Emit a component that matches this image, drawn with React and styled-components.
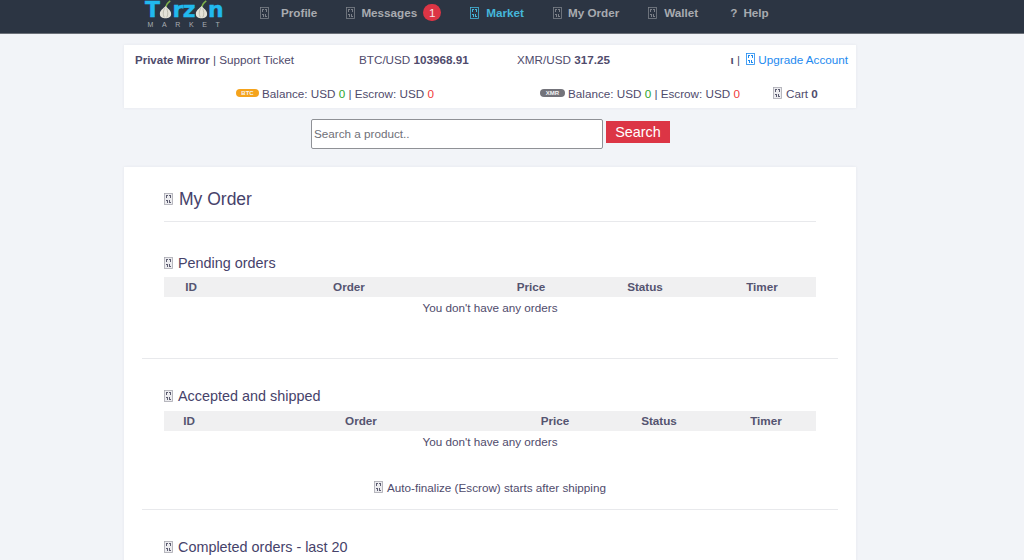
import React from 'react';
import styled, { createGlobalStyle } from 'styled-components';

const Global = createGlobalStyle`
  html, body { margin: 0; padding: 0; height: 560px; overflow: hidden; }
  body { background: #f2f4f8; font-family: "Liberation Sans", Arial, sans-serif; font-size: 11.7px; color: #4f4b6c; }
  * { box-sizing: border-box; }
`;

const Navbar = styled.div`
  height: 34px;
  background: #2c3543;
  border-bottom: 1px solid #6b7078;
  display: flex;
  align-items: flex-start;
  padding-left: 145px;
`;

const Logo = styled.div`
  width: 78px;
  height: 30px;
  margin-right: 37px;
  display: flex;
  flex-direction: column;
  align-items: center;
`;

const LogoName = styled.div`
  display: flex;
  align-items: center;
  height: 20px;
  font-family: "DejaVu Sans", sans-serif;
  font-weight: 700;
  font-size: 22px;
  line-height: 20px;
  letter-spacing: -0.6px;
  -webkit-text-stroke: 0.4px #21b9ee;
  color: #21b9ee;
`;

const LogoSub = styled.div`
  font-size: 7px;
  line-height: 8px;
  margin-top: 1px;
  letter-spacing: 8.6px;
  margin-right: -8px;
  color: #a9adb2;
`;

const NavList = styled.div`
  display: flex;
  align-items: center;
  gap: 29px;
  height: 25px;
`;

const NavItem = styled.a`
  display: flex;
  align-items: center;
  gap: ${p => p.$gap || 7}px;
  margin-right: ${p => p.$after || 0}px;
  font-weight: 700;
  font-size: 11.7px;
  color: ${p => (p.$active ? '#45b6da' : '#a8abb0')};
`;

const Badge = styled.span`
  width: 18px;
  height: 17px;
  border-radius: 9px;
  background: #dc3545;
  color: #f5e6e8;
  font-weight: 400;
  font-size: 11.7px;
  line-height: 17px;
  text-align: center;
`;

const Page = styled.div`
  width: 732px;
  margin: 11px 0 0 124px;
`;

const Card = styled.div`
  background: #fff;
  box-shadow: 0 0 3px rgba(40, 50, 80, 0.07);
`;

const InfoCard = styled(Card)`
  height: 63px;
`;

const RatesRow = styled.div`
  display: grid;
  grid-template-columns: 224px 158px 1fr;
  align-items: center;
  height: 28px;
  padding: 0 8px 0 11px;
`;

const BalanceRow = styled.div`
  display: grid;
  grid-template-columns: 304px 233px 1fr;
  align-items: center;
  height: 35px;
  padding: 5px 0 0 112px;
`;

const Cell = styled.div`
  white-space: pre;
  display: flex;
  align-items: center;
  justify-content: ${p => (p.$between ? 'space-between' : 'flex-start')};
  gap: ${p => p.$gap || 3}px;
`;

const Account = styled.span`
  display: flex;
  align-items: center;
  gap: 3px;
`;

const Mirror = styled.b`
  font-size: 11.5px;
`;

const Coin = styled.span`
  width: ${p => (p.$xmr ? 25 : 23)}px;
  height: 8px;
  border-radius: 4px;
  background: ${p => (p.$xmr ? '#73737a' : '#f5a31c')};
  color: #f4f4f4;
  font-size: 6px;
  font-weight: 700;
  line-height: 8px;
  text-align: center;
`;

const Green = styled.span`color: #2ea52e;`;
const Red = styled.span`color: #f03a3a;`;
const Link = styled.a`color: #1e8af0;`;

const SearchRow = styled.div`
  display: flex;
  align-items: flex-start;
  gap: 3px;
  margin: 11px 0 18px 187px;
`;

const SearchInput = styled.input`
  width: 292px;
  height: 30px;
  padding: 0 2px 2px;
  border: 1px solid #8f9196;
  border-radius: 2px;
  background: #fff;
  font-family: inherit;
  font-size: 11.7px;
  &::placeholder { color: #6f7078; opacity: 1; }
`;

const SearchButton = styled.button`
  width: 64px;
  height: 22px;
  margin-top: 2px;
  padding: 0;
  border: 0;
  background: #dc3545;
  color: #fff;
  font-family: inherit;
  font-size: 14.4px;
  line-height: 22px;
`;

const MainCard = styled(Card)`
  padding: 0 18px;
  height: 420px;
`;

const Inner = styled.div`
  padding: 0 22px;
`;

const PageHead = styled(Inner)`
  height: 54px;
  padding-top: 21px;
`;

const PageTitle = styled.div`
  display: flex;
  align-items: center;
  gap: 6px;
  height: 22px;
  font-size: 17.5px;
  line-height: 22px;
  color: #46426a;
`;

const Line = styled.div`
  height: 1px;
  background: #e8e9ec;
  margin: ${p => p.$margin || '0'};
`;

const SectionTitle = styled.div`
  display: flex;
  align-items: center;
  gap: 5px;
  height: 20px;
  margin-top: ${p => p.$top}px;
  margin-bottom: ${p => p.$bottom || 5}px;
  font-size: 14.4px;
  color: #46426a;
`;

const TableHead = styled.div`
  display: grid;
  grid-template-columns: ${p => p.$cols};
  height: 20px;
  background: #f0f0f1;
  font-weight: 700;
  font-size: 11.7px;
  line-height: 20px;
  text-align: center;
  color: #555470;
`;

const Empty = styled.div`
  height: 21px;
  padding-top: 1px;
  text-align: center;
  line-height: 20px;
`;

const Note = styled.div`
  display: flex;
  justify-content: center;
  align-items: center;
  gap: 4px;
  height: 20px;
  margin-top: 25px;
  margin-bottom: 12px;
`;

// the page's icon font is not available in the shot, so icons are "missing glyph" boxes
const Tofu = ({ color = '#7c8088', ink, fill = 'none' }) => (
  <svg width="9" height="12" viewBox="0 0 9 12" style={{ flex: 'none' }}>
    <rect x="0.5" y="0.5" width="8" height="11" fill={fill} stroke={color} strokeWidth="0.8" />
    <path d="M2 2h2v1H3v2H2zM5 2h2v3H6V3H5zM2 7h2v3H3V8H2zM5 7h1v2h1v1H5z" fill={ink || color} />
  </svg>
);

const BodyTofu = () => <Tofu color="#a8a8b0" ink="#5c5c70" fill="#ececef" />;

const Onion = () => (
  <svg width="13" height="20" viewBox="0 0 15 21" style={{ flex: 'none' }}>
    <path d="M8 8C8 4 10 2 13 0" stroke="#7fb24a" strokeWidth="1.8" fill="none" />
    <path d="M7.5 6C5 9 1 11 1 15c0 3.5 3 5 6.5 5s6.5-1.5 6.5-5c0-4-4-6-6.5-9z" fill="#e4e2d8" />
    <path d="M7 8c-2 3-3 6-1 11M9 9c1 3 2 6 0 10" stroke="#a9a89a" strokeWidth="0.8" fill="none" />
  </svg>
);

const cols1 = '54px 262px 102px 126px 108px';
const cols2 = '50px 294px 94px 114px 100px';

const Head = ({ cols }) => (
  <TableHead $cols={cols}>
    <div>ID</div>
    <div>Order</div>
    <div>Price</div>
    <div>Status</div>
    <div>Timer</div>
  </TableHead>
);

export default function App() {
  return (
    <>
      <Global />
      <Navbar>
        <Logo>
          <LogoName>T<Onion />rz<Onion />n</LogoName>
          <LogoSub>MARKET</LogoSub>
        </Logo>
        <NavList>
          <NavItem $gap={12}><Tofu />Profile</NavItem>
          <NavItem $gap={6}><Tofu />Messages<Badge>1</Badge></NavItem>
          <NavItem $active><Tofu color="#45b6da" />Market</NavItem>
          <NavItem $gap={6}><Tofu />My Order</NavItem>
          <NavItem $after={3}><Tofu />Wallet</NavItem>
          <NavItem $gap={6}><span>?</span>Help</NavItem>
        </NavList>
      </Navbar>
      <Page>
        <InfoCard>
          <RatesRow>
            <Cell><span><Mirror>Private Mirror</Mirror> | Support Ticket</span></Cell>
            <Cell><span>BTC/USD <b>103968.91</b></span></Cell>
            <Cell $between>
              <span>XMR/USD <b>317.25</b></span>
              <Account>
                <span><b>ι</b> | </span>
                <Tofu color="#1e8af0" />
                <Link>Upgrade Account</Link>
              </Account>
            </Cell>
          </RatesRow>
          <BalanceRow>
            <Cell><Coin>BTC</Coin><span>Balance: USD <Green>0</Green> | Escrow: USD <Red>0</Red></span></Cell>
            <Cell><Coin $xmr>XMR</Coin><span>Balance: USD <Green>0</Green> | Escrow: USD <Red>0</Red></span></Cell>
            <Cell $gap={4}><BodyTofu /><span>Cart <b>0</b></span></Cell>
          </BalanceRow>
        </InfoCard>
        <SearchRow>
          <SearchInput placeholder="Search a product.." />
          <SearchButton>Search</SearchButton>
        </SearchRow>
        <MainCard>
          <PageHead><PageTitle><BodyTofu />My Order</PageTitle></PageHead>
          <Line $margin="0 22px" />
          <Inner>
            <SectionTitle $top={31} $bottom={4}><BodyTofu />Pending orders</SectionTitle>
            <Head cols={cols1} />
            <Empty>You don't have any orders</Empty>
          </Inner>
          <Line $margin="40px 0 0" />
          <Inner>
            <SectionTitle $top={27}><BodyTofu />Accepted and shipped</SectionTitle>
            <Head cols={cols2} />
            <Empty>You don't have any orders</Empty>
            <Note><BodyTofu />Auto-finalize (Escrow) starts after shipping</Note>
          </Inner>
          <Line />
          <Inner>
            <SectionTitle $top={27}><BodyTofu />Completed orders - last 20</SectionTitle>
          </Inner>
        </MainCard>
      </Page>
    </>
  );
}
